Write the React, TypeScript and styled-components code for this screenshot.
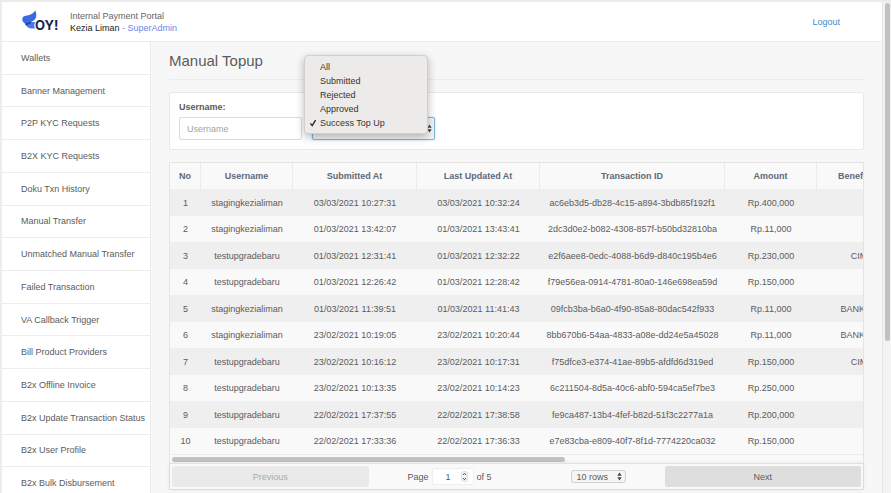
import React from "react";
import styled, { createGlobalStyle } from "styled-components";

const GlobalStyle = createGlobalStyle`
  * { box-sizing: border-box; }
  body {
    margin: 0;
    background: #ececec;
    color: #5b5b5b;
    font-family: "Liberation Sans", Arial, sans-serif;
    font-size: 9px;
    overflow: hidden;
  }
  button, input, select { font: inherit; color: inherit; }
`;

const Shell = styled.div`
  display: grid;
  grid-template-columns: 1fr 9px;
  height: 100vh;
  padding: 2px 0 0 2px;
`;

const Page = styled.div`
  display: flex;
  flex-direction: column;
  min-width: 0;
  min-height: 0;
  background: #f7f7f7;
`;

const Header = styled.header`
  display: flex;
  align-items: center;
  flex: none;
  height: 40px;
  padding: 0 42px 0 20px;
  background: #fff;
  border-bottom: 1px solid #ececec;
`;

const Logo = styled.svg`
  width: 39px;
  height: 24px;
  margin-right: 9px;
`;

const Identity = styled.div`
  flex: 1;
  line-height: 12px;
  color: #666;
`;

const UserName = styled.span`
  color: #222;
`;

const Role = styled.span`
  color: #6c86e8;
`;

const LogoutLink = styled.a`
  color: #3c8dc5;
  text-decoration: none;
`;

const Body = styled.div`
  display: flex;
  flex: 1;
  min-height: 0;
`;

const Sidebar = styled.nav`
  flex: none;
  width: 149px;
  overflow: hidden;
  background: #fff;
  border-right: 1px solid #ececec;
`;

const Menu = styled.ul`
  display: grid;
  grid-auto-rows: 1fr;
  height: calc(100% + 7px);
  margin: 0;
  padding: 0;
  list-style: none;
`;

const MenuLink = styled.a`
  display: flex;
  align-items: center;
  height: 100%;
  padding-left: 19px;
  border-bottom: 1px solid #ececec;
  color: #5b5b5b;
  text-decoration: none;
  white-space: nowrap;
`;

const Main = styled.main`
  flex: 1;
  min-width: 0;
  padding: 0 18px;
`;

const Title = styled.h1`
  margin: 0;
  padding: 8px 0 7px;
  border-bottom: 1px solid #ececec;
  font-size: 15px;
  font-weight: 400;
  line-height: 22px;
`;

const Filters = styled.form`
  display: flex;
  align-items: flex-end;
  gap: 10px;
  margin-top: 12px;
  padding: 8px 9px 9px;
  background: #fff;
  border: 1px solid #e8e8e8;
  border-radius: 2px;
`;

const Field = styled.div`
  position: relative;
  width: 123px;
`;

const Label = styled.label`
  display: block;
  margin-bottom: 3px;
  font-weight: 700;
  line-height: 13px;
`;

const TextInput = styled.input`
  display: block;
  width: 100%;
  height: 23px;
  padding: 0 7px;
  background: #fff;
  border: 1px solid #dcdcdc;
  border-radius: 2px;
  &::placeholder { color: #a3a3a3; }
`;

const SelectBox = styled.div`
  position: relative;
`;

const StatusSelect = styled.select`
  display: block;
  width: 100%;
  height: 23px;
  padding: 0 7px;
  appearance: none;
  background: #f4f4f4;
  border: 1px solid #78b7e2;
  border-radius: 2px;
  box-shadow: 0 0 2px #a9d3ef;
`;

const Arrows = styled.svg<{ $inset: number }>`
  position: absolute;
  top: 0;
  bottom: 0;
  right: ${(p) => p.$inset}px;
  width: 5px;
  height: 9px;
  margin: auto 0;
  pointer-events: none;
`;

const Options = styled.ul`
  position: absolute;
  z-index: 2;
  left: -8px;
  bottom: 6px;
  width: 124px;
  margin: 0;
  padding: 4px 0 3px;
  background: #edebe9;
  border: 1px solid #d2d0ce;
  border-radius: 4px;
  box-shadow: 0 3px 9px rgba(0, 0, 0, 0.28);
  color: #333;
  list-style: none;
`;

const Option = styled.li`
  display: grid;
  grid-template-columns: 7px 1fr;
  align-items: center;
  gap: 4px;
  height: 14px;
  padding-left: 4px;
`;

const TickMark = styled.svg`
  grid-column: 1;
  width: 8px;
  height: 8px;
`;

const OptionText = styled.span`
  grid-column: 2;
`;

const Panel = styled.section`
  margin-top: 12px;
  border: 1px solid #e4e4e4;
  background: #f9f9f9;
`;

const TableScroll = styled.div`
  overflow: hidden;
`;

const Table = styled.table`
  width: 1228px;
  table-layout: fixed;
  border-collapse: separate;
  border-spacing: 0;
  text-align: center;
`;

const Col = styled.col<{ $width?: number }>`
  width: ${(p) => (p.$width ? `${p.$width}px` : "auto")};
`;

const HeadCell = styled.th`
  height: 26px;
  padding: 0;
  border-right: 1px solid #ececec;
  color: #5f6878;
`;

const Row = styled.tr`
  height: 26px;
  &:nth-child(odd) {
    height: 27px;
    background: #efefef;
  }
`;

const Cell = styled.td`
  padding: 0;
  white-space: nowrap;
`;

const ScrollTrack = styled.div`
  height: 9px;
  padding: 2px;
  background: #fafafa;
  border-top: 1px solid #ececec;
`;

const ScrollThumb = styled.div`
  width: 57%;
  height: 5px;
  border-radius: 3px;
  background: #c1c1c1;
`;

const Pager = styled.div`
  display: grid;
  grid-template-columns: 1fr 296px 1fr;
  align-items: center;
  padding: 2px;
  border-top: 1px solid #e2e2e2;
  box-shadow: 0 0 4px rgba(0, 0, 0, 0.1);
`;

const PageButton = styled.button`
  height: 21px;
  padding: 0;
  background: #dedede;
  border: 0;
  border-radius: 2px;
  &:disabled {
    background: #eaeaea;
    color: #ababab;
  }
`;

const PagerMiddle = styled.div`
  display: flex;
  align-items: center;
  justify-content: space-between;
  padding: 0 39px;
`;

const PageInfo = styled.label`
  display: flex;
  align-items: center;
  gap: 3px;
`;

const NumberBox = styled.span`
  position: relative;
  width: 42px;
`;

const PageNumber = styled.input`
  display: block;
  width: 100%;
  height: 17px;
  padding: 0 9px 0 0;
  background: #fff;
  border: 1px solid #eee;
  border-radius: 2px;
  text-align: center;
`;

const Stepper = styled.svg`
  position: absolute;
  top: 3px;
  right: 6px;
  width: 7px;
  height: 11px;
`;

const RowsSelect = styled.select`
  display: block;
  width: 55px;
  height: 13px;
  padding: 0 5px;
  appearance: none;
  background: #f5f5f5;
  border: 1px solid #d0d0d0;
  border-radius: 3px;
`;

const PageScroll = styled.div`
  padding: 1px 1px 0 2px;
  background: #f3f3f3;
  border-left: 1px solid #e6e6e6;
`;

const PageThumb = styled.div`
  width: 5px;
  height: 69%;
  border-radius: 3px;
  background: #c1c1c1;
`;

const menuItems = [
  "Wallets",
  "Banner Management",
  "P2P KYC Requests",
  "B2X KYC Requests",
  "Doku Txn History",
  "Manual Transfer",
  "Unmatched Manual Transfer",
  "Failed Transaction",
  "VA Callback Trigger",
  "Bill Product Providers",
  "B2x Offline Invoice",
  "B2x Update Transaction Status",
  "B2x User Profile",
  "B2x Bulk Disbursement",
];

const statuses = ["All", "Submitted", "Rejected", "Approved", "Success Top Up"];

const columns: { title: string; width?: number }[] = [
  { title: "No", width: 31 },
  { title: "Username", width: 92 },
  { title: "Submitted At", width: 124 },
  { title: "Last Updated At", width: 123 },
  { title: "Transaction ID", width: 185 },
  { title: "Amount", width: 92 },
  { title: "Beneficiary Bank", width: 116 },
  { title: "" },
];

const rows = [
  ["stagingkezialiman", "03/03/2021 10:27:31", "03/03/2021 10:32:24", "ac6eb3d5-db28-4c15-a894-3bdb85f192f1", "Rp.400,000", ""],
  ["stagingkezialiman", "01/03/2021 13:42:07", "01/03/2021 13:43:41", "2dc3d0e2-b082-4308-857f-b50bd32810ba", "Rp.11,000", ""],
  ["testupgradebaru", "01/03/2021 12:31:41", "01/03/2021 12:32:22", "e2f6aee8-0edc-4088-b6d9-d840c195b4e6", "Rp.230,000", "CIMB Niaga"],
  ["testupgradebaru", "01/03/2021 12:26:42", "01/03/2021 12:28:42", "f79e56ea-0914-4781-80a0-146e698ea59d", "Rp.150,000", ""],
  ["stagingkezialiman", "01/03/2021 11:39:51", "01/03/2021 11:41:43", "09fcb3ba-b6a0-4f90-85a8-80dac542f933", "Rp.11,000", "BANK PERMATA"],
  ["stagingkezialiman", "23/02/2021 10:19:05", "23/02/2021 10:20:44", "8bb670b6-54aa-4833-a08e-dd24e5a45028", "Rp.11,000", "BANK PERMATA"],
  ["testupgradebaru", "23/02/2021 10:16:12", "23/02/2021 10:17:31", "f75dfce3-e374-41ae-89b5-afdfd6d319ed", "Rp.150,000", "CIMB Niaga"],
  ["testupgradebaru", "23/02/2021 10:13:35", "23/02/2021 10:14:23", "6c211504-8d5a-40c6-abf0-594ca5ef7be3", "Rp.250,000", ""],
  ["testupgradebaru", "22/02/2021 17:37:55", "22/02/2021 17:38:58", "fe9ca487-13b4-4fef-b82d-51f3c2277a1a", "Rp.200,000", ""],
  ["testupgradebaru", "22/02/2021 17:33:36", "22/02/2021 17:36:33", "e7e83cba-e809-40f7-8f1d-7774220ca032", "Rp.150,000", ""],
];

function UpDown({ inset }: { inset: number }) {
  return (
    <Arrows $inset={inset} viewBox="0 0 5 9" aria-hidden="true">
      <path d="M2.5 0.5 L4.7 3.7 H0.3 Z M2.5 8.5 L0.3 5.3 H4.7 Z" fill="#444" />
    </Arrows>
  );
}

export default function App() {
  return (
    <>
      <GlobalStyle />
      <Shell>
        <Page>
          <Header>
            <Logo viewBox="0 0 39 24" role="img" aria-label="OY!">
              <path d="M13.2 0.3 C15 4 14.8 8.2 11.6 10.6 C9.4 12.2 6.2 12.4 3.4 14 C0.8 12.6 -0.4 9.8 0.6 7.8 C1.8 5.4 5.6 5.8 8.4 4.6 C10.6 3.6 12.3 2.3 13.2 0.3 Z" fill="#3a69e0" />
              <path d="M3.2 13.8 C6.4 12 10 11.6 13.4 12.4 C11.9 14 11.9 16 13.2 18.2 C8.6 19.4 4.2 17.6 3.2 13.8 Z" fill="#4a78e8" />
              <path d="M3.3 14 C5 12.6 7.4 12 9.6 11.8 C8.8 13.7 6.4 15 3.6 15 Z" fill="#1b3f9c" />
              <text x="13" y="20" fontSize="13" fontWeight="700" fontFamily="Inter, sans-serif" fill="#14254d">OY!</text>
            </Logo>
            <Identity>
              <div>Internal Payment Portal</div>
              <div><UserName>Kezia Liman</UserName> <Role>- SuperAdmin</Role></div>
            </Identity>
            <LogoutLink href="#logout">Logout</LogoutLink>
          </Header>
          <Body>
            <Sidebar aria-label="Main">
              <Menu>
                {menuItems.map((item) => (
                  <li key={item}><MenuLink href="#">{item}</MenuLink></li>
                ))}
              </Menu>
            </Sidebar>
            <Main>
              <Title>Manual Topup</Title>
              <Filters>
                <Field>
                  <Label htmlFor="username">Username:</Label>
                  <TextInput id="username" placeholder="Username" />
                </Field>
                <Field>
                  <SelectBox>
                    <StatusSelect aria-label="Status" defaultValue="Success Top Up">
                      {statuses.map((s) => <option key={s}>{s}</option>)}
                    </StatusSelect>
                    <UpDown inset={3} />
                  </SelectBox>
                  <Options role="listbox" aria-label="Status">
                    {statuses.map((s) => {
                      const selected = s === "Success Top Up";
                      return (
                        <Option key={s} role="option" aria-selected={selected}>
                          {selected && (
                            <TickMark viewBox="0 0 8 8" aria-hidden="true">
                              <path d="M1.4 4.4 L3.2 6.6 L6.6 1.2" fill="none" stroke="#222" strokeWidth="1.3" />
                            </TickMark>
                          )}
                          <OptionText>{s}</OptionText>
                        </Option>
                      );
                    })}
                  </Options>
                </Field>
              </Filters>
              <Panel>
                <TableScroll>
                  <Table>
                    <colgroup>
                      {columns.map((c) => <Col key={c.title} $width={c.width} />)}
                    </colgroup>
                    <thead>
                      <tr>{columns.map((c) => <HeadCell key={c.title} scope="col">{c.title}</HeadCell>)}</tr>
                    </thead>
                    <tbody>
                      {rows.map((cells, i) => (
                        <Row key={cells[3]}>
                          <Cell>{i + 1}</Cell>
                          {cells.map((c, j) => <Cell key={j}>{c}</Cell>)}
                          <Cell />
                        </Row>
                      ))}
                    </tbody>
                  </Table>
                </TableScroll>
                <ScrollTrack><ScrollThumb /></ScrollTrack>
                <Pager>
                  <PageButton type="button" disabled>Previous</PageButton>
                  <PagerMiddle>
                    <PageInfo>
                      Page
                      <NumberBox>
                        <PageNumber defaultValue="1" inputMode="numeric" />
                        <Stepper viewBox="0 0 7 11" aria-hidden="true">
                          <rect x="0.5" y="0.5" width="6" height="10" rx="2.5" fill="#f6f6f6" stroke="#cfcfcf" strokeWidth="0.7" />
                          <path d="M2 4 L3.5 2.2 L5 4 M2 7 L3.5 8.8 L5 7" fill="none" stroke="#555" strokeWidth="1" />
                        </Stepper>
                      </NumberBox>
                      of 5
                    </PageInfo>
                    <SelectBox>
                      <RowsSelect aria-label="Rows per page"><option>10 rows</option></RowsSelect>
                      <UpDown inset={4} />
                    </SelectBox>
                  </PagerMiddle>
                  <PageButton type="button">Next</PageButton>
                </Pager>
              </Panel>
            </Main>
          </Body>
        </Page>
        <PageScroll><PageThumb /></PageScroll>
      </Shell>
    </>
  );
}
